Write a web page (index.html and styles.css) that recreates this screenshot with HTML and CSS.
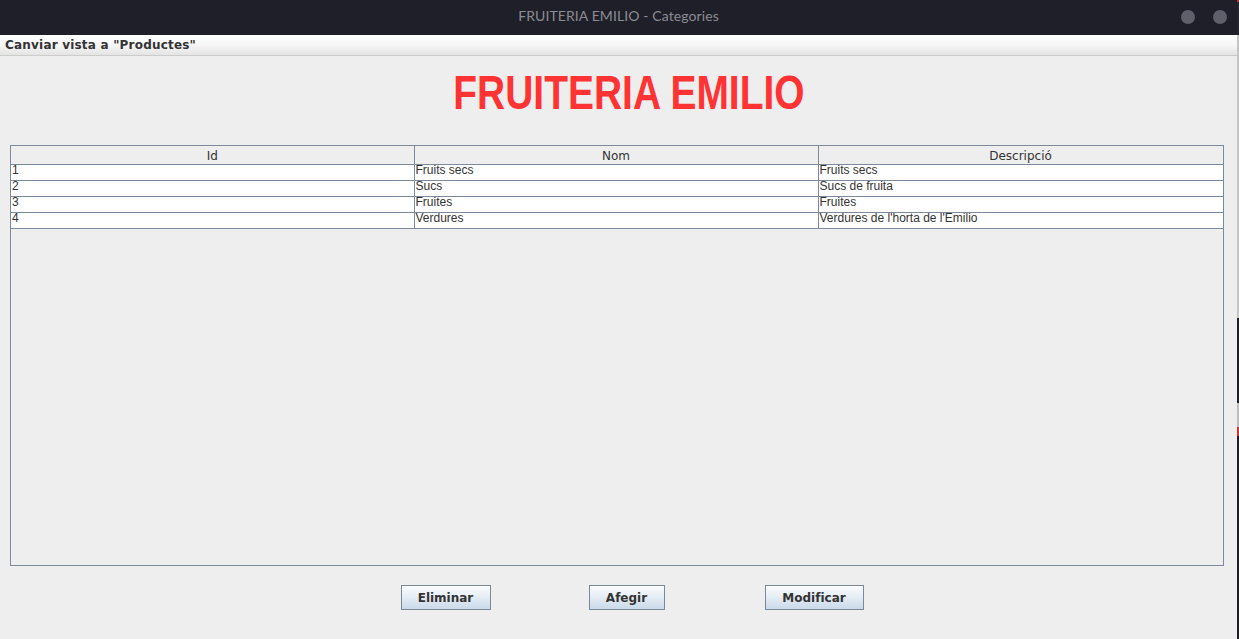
FILE: index.html
```html
<!DOCTYPE html>
<html lang="ca">
<head>
<meta charset="utf-8">
<title>FRUITERIA EMILIO - Categories</title>
<link rel="stylesheet" href="styles.css">
</head>
<body>
<div class="screen">
  <div class="app">
    <div class="titlebar">
      <span class="title">FRUITERIA EMILIO - Categories</span>
      <div class="wm-buttons">
        <span class="dot"></span>
        <span class="dot"></span>
      </div>
    </div>
    <div class="menubar">
      <span class="menu-item">Canviar vista a "Productes"</span>
    </div>
    <div class="content">
      <div class="brand-row">
        <h1 class="brand">FRUITERIA EMILIO</h1>
      </div>
      <div class="scrollpane">
        <table class="grid">
          <colgroup>
            <col class="c1"><col class="c2"><col class="c3">
          </colgroup>
          <thead>
            <tr><th>Id</th><th>Nom</th><th>Descripció</th></tr>
          </thead>
          <tbody>
            <tr><td>1</td><td>Fruits secs</td><td>Fruits secs</td></tr>
            <tr><td>2</td><td>Sucs</td><td>Sucs de fruita</td></tr>
            <tr><td>3</td><td>Fruites</td><td>Fruites</td></tr>
            <tr><td>4</td><td>Verdures</td><td>Verdures de l'horta de l'Emilio</td></tr>
          </tbody>
        </table>
      </div>
      <div class="actions">
        <button class="btn btn-del">Eliminar</button>
        <button class="btn btn-add">Afegir</button>
        <button class="btn btn-mod">Modificar</button>
      </div>
    </div>
  </div>
  <div class="edge"></div>
</div>
</body>
</html>
```

FILE: styles.css
```css
html, body {
  margin: 0;
  padding: 0;
  background: #eeeeee;
}
.screen {
  display: flex;
  width: 1239px;
  height: 639px;
  overflow: hidden;
}
.app {
  width: 1237px;
  height: 639px;
  display: flex;
  flex-direction: column;
  background: #eeeeee;
}
.edge {
  width: 2px;
  height: 639px;
  background: linear-gradient(to bottom,
    #c03030 0, #c03030 2px,
    #24242c 2px, #24242c 35px,
    #c4c4c4 35px, #c4c4c4 318px,
    #1e1e26 318px, #1e1e26 403px,
    #bdbdbd 403px, #bdbdbd 427px,
    #d03434 427px, #d03434 436px,
    #1e1e26 436px, #1e1e26 639px);
}
.titlebar {
  height: 35px;
  background: #1f1f29;
  display: flex;
  align-items: center;
  justify-content: center;
  position: relative;
}
.title {
  font-family: "Lato", "DejaVu Sans", sans-serif;
  font-size: 14px;
  color: #8c8c94;
  margin-top: -5px;
  letter-spacing: 0.1px;
}
.wm-buttons {
  position: absolute;
  right: 10px;
  top: 10px;
  display: flex;
  gap: 18px;
}
.dot {
  width: 14px;
  height: 14px;
  border-radius: 50%;
  background: #60606c;
}
.menubar {
  height: 20px;
  border-bottom: 1px solid #cccccc;
  background: linear-gradient(to bottom, #ffffff 0%, #f6f6f6 50%, #e4e4e4 100%);
  display: flex;
  align-items: center;
  padding-left: 5px;
}
.menu-item {
  font-family: "DejaVu Sans", sans-serif;
  font-weight: bold;
  font-size: 12px;
  letter-spacing: 0.2px;
  color: #333333;
  line-height: 20px;
}
.content {
  flex: 1;
  display: flex;
  flex-direction: column;
}
.brand-row {
  margin-top: 8px;
  padding-left: 20px;
  display: flex;
  justify-content: center;
}
.brand {
  margin: 0;
  font-family: "Liberation Sans", sans-serif;
  font-weight: bold;
  font-size: 49px;
  line-height: 56px;
  color: #ff3333;
  transform: scaleX(0.795);
  white-space: nowrap;
}
.scrollpane {
  margin: 25px 0 0 10px;
  width: 1212px;
  height: 419px;
  border: 1px solid #7b8b9c;
  background: #eeeeee;
}
.grid {
  width: 1212px;
  border-collapse: collapse;
  table-layout: fixed;
}
.grid col.c1 { width: 403px; }
.grid col.c2 { width: 404px; }
.grid col.c3 { width: 405px; }
.grid th {
  height: 17px;
  padding: 1px 0 0 0;
  font-family: "DejaVu Sans", sans-serif;
  font-weight: normal;
  font-size: 12px;
  line-height: 16px;
  color: #333333;
  background: #eeeeee;
  border-right: 1px solid #7b8b9c;
  border-bottom: 1px solid #7b8b9c;
  text-align: center;
  overflow: hidden;
}
.grid td {
  height: 15px;
  padding: 0 0 0 1px;
  font-family: "Liberation Sans", Arial, sans-serif;
  font-size: 12px;
  line-height: 10px;
  vertical-align: top;
  color: #333333;
  background: #ffffff;
  border-right: 1px solid #7b8b9c;
  border-bottom: 1px solid #7b8b9c;
  white-space: nowrap;
  overflow: hidden;
}
.actions {
  margin-top: 19px;
  display: flex;
  justify-content: center;
  padding-left: 27px;
}
.btn {
  height: 25px;
  border: 1px solid #7a8a99;
  border-radius: 0;
  background: linear-gradient(to bottom, #fbfcfe 0%, #e6eef6 45%, #cbd9e8 100%);
  font-family: "DejaVu Sans", sans-serif;
  font-weight: bold;
  font-size: 12px;
  color: #333333;
  padding: 0;
  margin: 0;
}
.btn-del { width: 90px; }
.btn-add { width: 76px; margin-left: 98px; }
.btn-mod { width: 99px; margin-left: 100px; }
```
